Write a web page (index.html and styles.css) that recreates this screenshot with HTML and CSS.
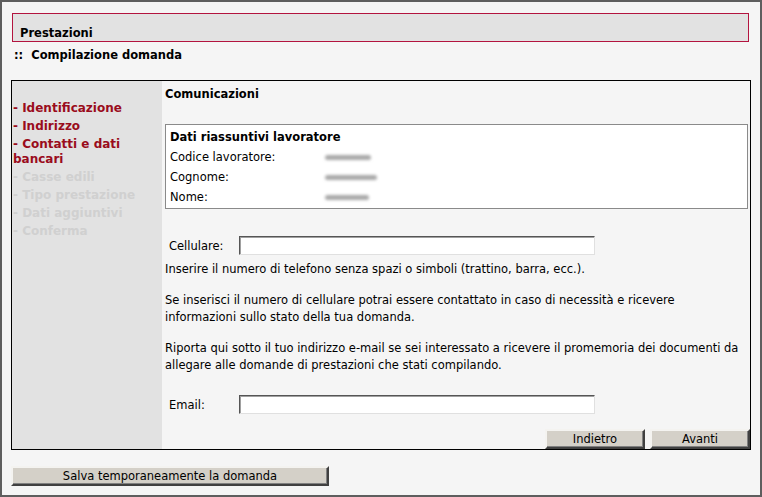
FILE: index.html
```html
<!DOCTYPE html>
<html lang="it">
<head>
  <meta charset="UTF-8">
  <title>Prestazioni - Compilazione domanda</title>
  <link rel="stylesheet" href="styles.css">
</head>
<body>
  <div class="frame">
    <div class="page-title">Prestazioni</div>
    <div class="subtitle">::&nbsp; Compilazione domanda</div>

    <div class="wizard">
      <div class="steps">
        <div class="step done">- Identificazione</div>
        <div class="step done">- Indirizzo</div>
        <div class="step done">- Contatti e dati bancari</div>
        <div class="step">- Casse edili</div>
        <div class="step">- Tipo prestazione</div>
        <div class="step">- Dati aggiuntivi</div>
        <div class="step">- Conferma</div>
      </div>

      <div class="content">
        <div class="section-title">Comunicazioni</div>

        <div class="summary">
          <div class="summary-title">Dati riassuntivi lavoratore</div>
          <div class="summary-row"><span class="summary-label">Codice lavoratore:</span><span class="blur w1"></span></div>
          <div class="summary-row"><span class="summary-label">Cognome:</span><span class="blur w2"></span></div>
          <div class="summary-row"><span class="summary-label">Nome:</span><span class="blur w3"></span></div>
        </div>

        <div class="field">
          <label for="cell">Cellulare:</label>
          <input type="text" id="cell">
        </div>
        <p class="hint">Inserire il numero di telefono senza spazi o simboli (trattino, barra, ecc.).</p>
        <p class="note">Se inserisci il numero di cellulare potrai essere contattato in caso di necessità e ricevere informazioni sullo stato della tua domanda.</p>
        <p class="note">Riporta qui sotto il tuo indirizzo e-mail se sei interessato a ricevere il promemoria dei documenti da allegare alle domande di prestazioni che stati compilando.</p>

        <div class="field email">
          <label for="email">Email:</label>
          <input type="text" id="email">
        </div>

        <div class="nav">
          <button class="btn">Indietro</button>
          <button class="btn">Avanti</button>
        </div>
      </div>
    </div>

    <button class="btn save-btn">Salva temporaneamente la domanda</button>
  </div>
</body>
</html>
```

FILE: styles.css
```css
body {
  margin: 0;
  padding: 0;
  font-family: Tahoma, "DejaVu Sans", Verdana, sans-serif;
  font-size: 11.5px;
  color: #000;
  background: #f5f5f5;
}
.frame {
  height: 497px;
  box-sizing: border-box;
  border: 2px solid #5e5e5e;
  background: #f5f5f5;
  padding: 11px 9px 0 9px;
}
.page-title {
  margin: 0 2px 0 1px;
  height: 26px;
  border: 1px solid #b3143f;
  background: #e2e2e2;
  font-weight: bold;
  padding: 0 7px 1px 7px;
  line-height: 14px;
  display: flex;
  align-items: flex-end;
}
.subtitle {
  font-weight: bold;
  margin: 6px 0 0 3px;
  line-height: 15px;
}
.wizard {
  display: flex;
  margin-top: 17px;
  height: 370px;
  box-sizing: border-box;
  border: 1px solid #000;
}
.steps {
  width: 150px;
  flex-shrink: 0;
  background: #e2e2e2;
  padding: 20px 2px 0 1px;
  box-sizing: border-box;
  font-weight: bold;
  font-size: 12px;
}
.step {
  color: #d0d0d0;
  line-height: 15px;
  margin-bottom: 3px;
}
.step.done {
  color: #9a0c1c;
}
.content {
  flex: 1;
  display: flex;
  flex-direction: column;
  padding: 6px 0 0 3px;
}
.section-title {
  font-weight: bold;
  line-height: 14px;
}
.summary {
  margin: 23px 2px 0 0;
  background: #fff;
  border: 1px solid #8a8a8a;
  padding: 5px 4px 2px 4px;
  height: 85px;
  box-sizing: border-box;
}
.summary-title {
  font-weight: bold;
  line-height: 14px;
  margin-bottom: 3px;
}
.summary-row {
  display: flex;
  align-items: center;
  height: 20px;
}
.summary-label {
  width: 155px;
}
.blur {
  display: inline-block;
  height: 5px;
  border-radius: 3px;
  background: #a8a8a8;
  filter: blur(1.5px);
}
.w1 { width: 46px; }
.w2 { width: 52px; }
.w3 { width: 44px; }
.field {
  display: flex;
  align-items: center;
  margin: 27px 0 0 4px;
}
.field label {
  width: 70px;
}
.field input {
  width: 356px;
  height: 19px;
  box-sizing: border-box;
  margin: 0;
  padding: 1px 3px;
  font: inherit;
  background: #fff;
  border: 1px solid;
  border-color: #555 #e0e0e0 #e0e0e0 #555;
  box-shadow: inset 1px 1px 0 #a0a0a0;
}
.hint {
  margin: 6px 0 0 0;
  line-height: 16px;
}
.note {
  margin: 15px 0 0 0;
  padding-right: 8px;
  line-height: 16.5px;
}
.field.email {
  margin-top: 22px;
}
.nav {
  margin-top: auto;
  display: flex;
  justify-content: flex-end;
  gap: 5px;
}
.btn {
  font: inherit;
  color: #000;
  background: #d4d0c8;
  border: 2px solid;
  border-color: #f4f3f0 #404040 #404040 #f4f3f0;
  box-shadow: inset -1px -1px 0 #808080;
  padding: 0;
  height: 20px;
  width: 100px;
}
.save-btn {
  display: block;
  margin-top: 16px;
  width: 318px;
}
```
